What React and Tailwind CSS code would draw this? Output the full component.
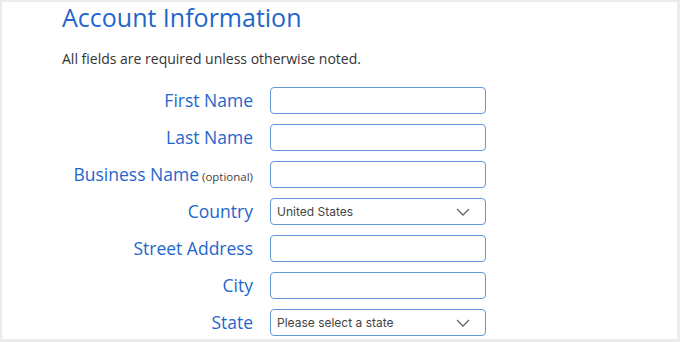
import React from "react";

const Chevron = () => (
  <svg width="14" height="8" viewBox="0 0 14 8" fill="none" className="absolute right-[15px] top-1/2 -translate-y-1/2">
    <path d="M1 1l6 6 6-6" stroke="#666" strokeWidth="1.3" />
  </svg>
);

const Field = ({ label, optional, select }) => (
  <>
    <div className="flex items-baseline justify-end text-[17.5px] leading-none text-[#1f66cc]">
      <span>{label}</span>
      {optional && <span className="ml-[3px] text-[11.5px] text-[#444]">(optional)</span>}
    </div>
    <div className="relative h-[27px] w-[216px] rounded-[4px] border border-[#6497d8] bg-white">
      {select && (
        <>
          <span className="absolute left-[6px] top-1/2 -translate-y-1/2 text-[12px] text-[#444] font-['Inter',sans-serif]">{select}</span>
          <Chevron />
        </>
      )}
    </div>
  </>
);

export default function App() {
  return (
    <div className="h-[342px] w-[680px] bg-[#ececec] pl-[2px] pt-[2px] pr-[3px] pb-[3px] font-['Open_Sans',sans-serif]">
      <div className="h-full w-full bg-white pl-[60px]">
        <h1 className="text-[25px] leading-[30px] text-[#1f66cc]">Account Information</h1>
        <p className="mt-[17px] text-[14px] leading-[20px] text-[#333]">All fields are required unless otherwise noted.</p>
        <div className="mt-[18px] grid grid-cols-[191px_216px] items-center gap-x-[17px] gap-y-[10px]">
          <Field label="First Name" />
          <Field label="Last Name" />
          <Field label="Business Name" optional />
          <Field label="Country" select="United States" />
          <Field label="Street Address" />
          <Field label="City" />
          <Field label="State" select="Please select a state" />
        </div>
      </div>
    </div>
  );
}
